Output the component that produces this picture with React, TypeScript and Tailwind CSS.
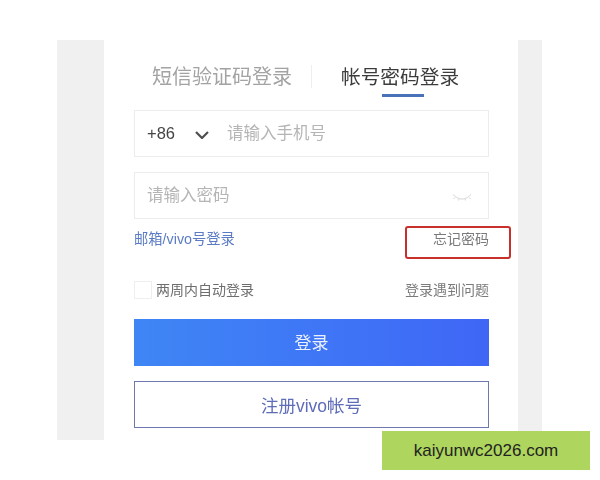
const fontStack = { fontFamily: '"Liberation Sans", "Noto Sans CJK SC", sans-serif' };

const EyeClosed = () => (
  <svg width="20" height="8" viewBox="0 0 20 8" fill="none" stroke="#d6d6d6" strokeWidth="1">
    <path d="M1 1.5 C5 5 7 6 10 6 C13 6 15 5 19 1.5" />
    <path d="M3 4.5 L1.5 6 M7 6 L6.5 7.5 M13 6 L13.5 7.5 M17 4.5 L18.5 6" />
  </svg>
);

const ChevronDown = () => (
  <svg width="14" height="8" viewBox="0 0 14 8" fill="none" stroke="#4f4f4f" strokeWidth="2.2">
    <path d="M1 1 L7 7 L13 1" />
  </svg>
);

export default function App() {
  return (
    <div className="relative h-[480px] w-[600px] overflow-hidden bg-white pl-[57px] pt-[40px]" style={fontStack}>
      <div className="h-[400px] w-[485px] bg-[#f0f0f0] pl-[47px]">
        <div className="h-[400px] w-[414px] bg-white pl-[30px] pr-[29px] [filter:blur(0.45px)]">
          {/* tabs */}
          <div className="flex h-[70px] items-start pl-[18px]">
            <div className="mt-[25px] w-[140px] text-[20px] leading-[24px] text-[#a3a3a3]">短信验证码登录</div>
            <div className="ml-[19px] mt-[25px] h-[23px] w-px bg-[#eeeeee]" />
            <div className="ml-[29px] flex flex-col items-center">
              <div className="mt-[25px] text-[19.7px] leading-[24px] text-[#3c3c3c]">帐号密码登录</div>
              <div className="ml-[6px] mt-[5px] h-[3px] w-[42px] bg-[#4a72b8]" />
            </div>
          </div>

          {/* phone */}
          <div className="flex h-[47px] items-center border border-[#ececec] pl-[12px]">
            <span className="w-[30px] text-[16.5px] text-[#444444]">+86</span>
            <span className="ml-[18px] mt-[3px] flex"><ChevronDown /></span>
            <span className="ml-[18px] text-[16.5px] text-[#b5b5b5]">请输入手机号</span>
          </div>

          {/* password */}
          <div className="mt-[15px] flex h-[47px] items-center justify-between border border-[#ececec] pl-[12px] pr-[16px]">
            <span className="text-[16.5px] text-[#b5b5b5]">请输入密码</span>
            <span className="mt-[3px] flex"><EyeClosed /></span>
          </div>

          <div className="mt-[11px] flex h-[18px] items-center justify-between text-[14px] leading-[18px]">
            <span className="text-[14.3px] text-[#5b7cc4]">邮箱/vivo号登录</span>
            <span className="text-[#7a7a7a]">忘记密码</span>
          </div>

          <div className="mt-[33px] flex h-[18px] items-center justify-between">
            <div className="flex items-center">
              <span className="h-[18px] w-[18px] border border-[#eeeeee] bg-white" />
              <span className="ml-[4px] text-[14px] text-[#6e6e6e]">两周内自动登录</span>
            </div>
            <span className="text-[14px] text-[#7a7a7a]">登录遇到问题</span>
          </div>

          <button className="mt-[20px] flex h-[47px] w-full items-center justify-center bg-gradient-to-r from-[#3f86f5] to-[#3f66f6] pt-[3px] text-[17px] text-[#eaf0ff]">
            登录
          </button>
          <button className="mt-[15px] flex h-[47px] w-full items-center justify-center border border-[#6f78ae] bg-white pt-[3px] text-[17.5px] text-[#5f6cb8]">
            注册vivo帐号
          </button>
        </div>
      </div>

      {/* red annotation */}
      <div className="absolute left-[405px] top-[226px] h-[33px] w-[106px] rounded-[3px] border-[2.5px] border-[#c8302c]" />

      {/* watermark */}
      <div className="absolute left-[382px] top-[431px] flex h-[39px] w-[208px] items-center justify-center bg-[#aed55d] text-[17px] text-[#222222]">
        kaiyunwc2026.com
      </div>
    </div>
  );
}
